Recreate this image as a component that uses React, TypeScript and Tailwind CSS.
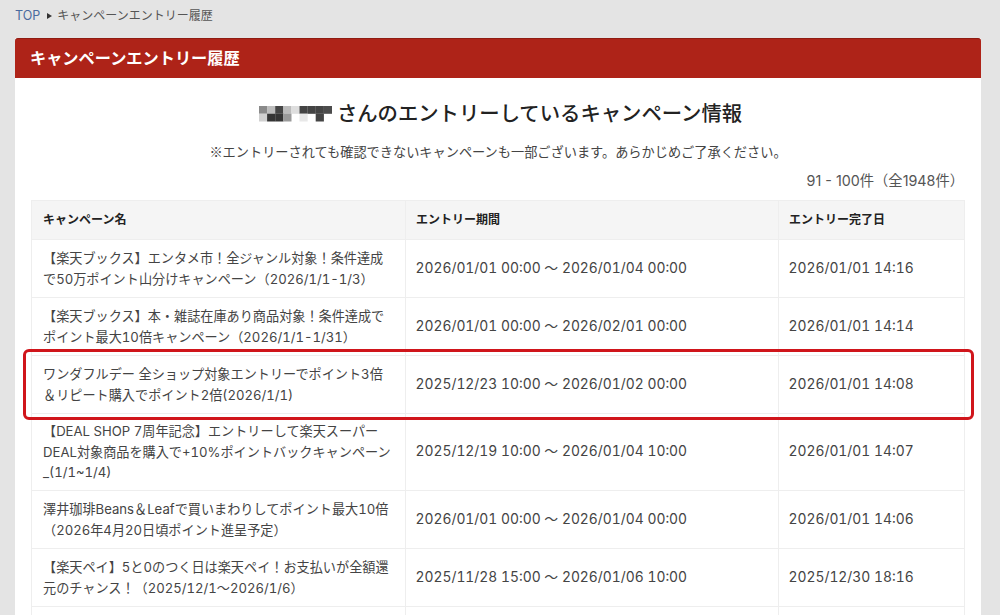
const rows: [string[], string, string][] = [
  [["【楽天ブックス】エンタメ市！全ジャンル対象！条件達成", "で50万ポイント山分けキャンペーン（2026/1/1-1/3）"], "2026/01/01 00:00 〜 2026/01/04 00:00", "2026/01/01 14:16"],
  [["【楽天ブックス】本・雑誌在庫あり商品対象！条件達成で", "ポイント最大10倍キャンペーン（2026/1/1-1/31）"], "2026/01/01 00:00 〜 2026/02/01 00:00", "2026/01/01 14:14"],
  [["ワンダフルデー 全ショップ対象エントリーでポイント3倍", "＆リピート購入でポイント2倍(2026/1/1)"], "2025/12/23 10:00 〜 2026/01/02 00:00", "2026/01/01 14:08"],
  [["【DEAL SHOP 7周年記念】エントリーして楽天スーパー", "DEAL対象商品を購入で+10%ポイントバックキャンペーン", "_(1/1~1/4)"], "2025/12/19 10:00 〜 2026/01/04 10:00", "2026/01/01 14:07"],
  [["澤井珈琲Beans＆Leafで買いまわりしてポイント最大10倍", "（2026年4月20日頃ポイント進呈予定）"], "2026/01/01 00:00 〜 2026/01/04 00:00", "2026/01/01 14:06"],
  [["【楽天ペイ】5と0のつく日は楽天ペイ！お支払いが全額還", "元のチャンス！（2025/12/1〜2026/1/6）"], "2025/11/28 15:00 〜 2026/01/06 10:00", "2025/12/30 18:16"],
];

const cells: [number, number, string][] = [
  [0, 0, "#8a8a8a"], [1, 0, "#bdbdbd"], [2, 0, "#454545"], [3, 0, "#bcbcbc"], [4, 0, "#dedede"], [5, 0, "#444444"], [6, 0, "#444444"], [7, 0, "#444444"], [8, 0, "#4c4c4c"],
  [0, 1, "#d0d0d0"], [1, 1, "#353535"], [2, 1, "#353535"], [3, 1, "#9a9a9a"], [5, 1, "#e8e8e8"], [7, 1, "#444444"],
];

export default function App() {
  return (
    <div className="relative h-[615px] w-[1000px] overflow-hidden bg-[#e4e4e4] font-['Inter','Noto_Sans_CJK_JP',sans-serif] text-[#333333]">
      <div className="flex h-[38px] items-start pl-[15px] pt-[8px] text-[12px] leading-[16px] text-[#555555]">
        <span className="text-[12.5px] text-[#4a6a9e]">TOP</span>
        <span className="ml-[7px] mr-[5px] mt-[5px] h-0 w-0 border-y-[3px] border-l-[5px] border-y-transparent border-l-[#333333]" />
        <span>キャンペーンエントリー履歴</span>
      </div>
      <main className="ml-[15px] w-[966px] bg-white">
        <h1 className="flex h-[40px] items-center rounded-t-[3px] border-t border-[#8f1c12] bg-[#ae2318] pl-[15px] text-[16.2px] font-bold text-white">
          キャンペーンエントリー履歴
        </h1>
        <div className="px-[16px]">
          <h2 className="flex items-center justify-center pl-[5px] pt-[22px] text-[20.35px] font-medium leading-[28px] text-[#222222]">
            <svg width="78" height="16" viewBox="0 0 78 16" aria-hidden="true">
              {cells.map(([x, y, c]) => (
                <rect key={`${x}-${y}`} x={x * 8.1} y={y * 7.7} width="8.2" height="7.8" fill={c} />
              ))}
            </svg>
            <span>さんのエントリーしているキャンペーン情報</span>
          </h2>
          <p className="mt-[14px] text-center text-[13.2px] leading-[20px] text-[#444444]">
            <span className="font-['Noto_Sans_CJK_JP']">※</span>エントリーされても確認できないキャンペーンも一部ございます。あらかじめご了承ください。
          </p>
          <p className="mt-[9px] pr-[1px] text-right text-[14.3px] leading-[20px] text-[#555555]">91 - 100件（全1948件）</p>
          <table className="mt-[9px] w-[933px] table-fixed border-collapse">
            <colgroup>
              <col className="w-[374px]" />
              <col className="w-[373px]" />
              <col className="w-[186px]" />
            </colgroup>
            <thead>
              <tr className="h-[39px] bg-[#f5f5f5] text-left text-[12px] font-bold text-[#222222]">
                <th className="border border-[#eeeeee] pl-[11px]">キャンペーン名</th>
                <th className="border border-[#eeeeee] pl-[10px]">エントリー期間</th>
                <th className="border border-[#eeeeee] pl-[10px]">エントリー完了日</th>
              </tr>
            </thead>
            <tbody>
              {rows.map(([name, period, done], i) => (
                <tr key={i} className={i === 3 ? "h-[77px]" : "h-[58px]"}>
                  <td className="whitespace-nowrap border border-[#eeeeee] pl-[11px] text-[13.15px] leading-[20.5px] text-[#444444] tabular-nums">
                    {name.map((l, j) => (
                      <div key={j}>{l}</div>
                    ))}
                  </td>
                  <td className="whitespace-nowrap border border-[#eeeeee] pb-[1px] pl-[9.5px] text-[13.85px] text-[#444444] tabular-nums">{period}</td>
                  <td className="whitespace-nowrap border border-[#eeeeee] pb-[1px] pl-[9.5px] text-[13.85px] text-[#444444] tabular-nums">{done}</td>
                </tr>
              ))}
              <tr className="h-[20px]">
                <td className="border border-[#eeeeee]" />
                <td className="border border-[#eeeeee]" />
                <td className="border border-[#eeeeee]" />
              </tr>
            </tbody>
          </table>
        </div>
      </main>
      <div className="absolute left-[23px] top-[349px] h-[71px] w-[951px] rounded-[6px] border-[3px] border-[#d0151b]" />
    </div>
  );
}
